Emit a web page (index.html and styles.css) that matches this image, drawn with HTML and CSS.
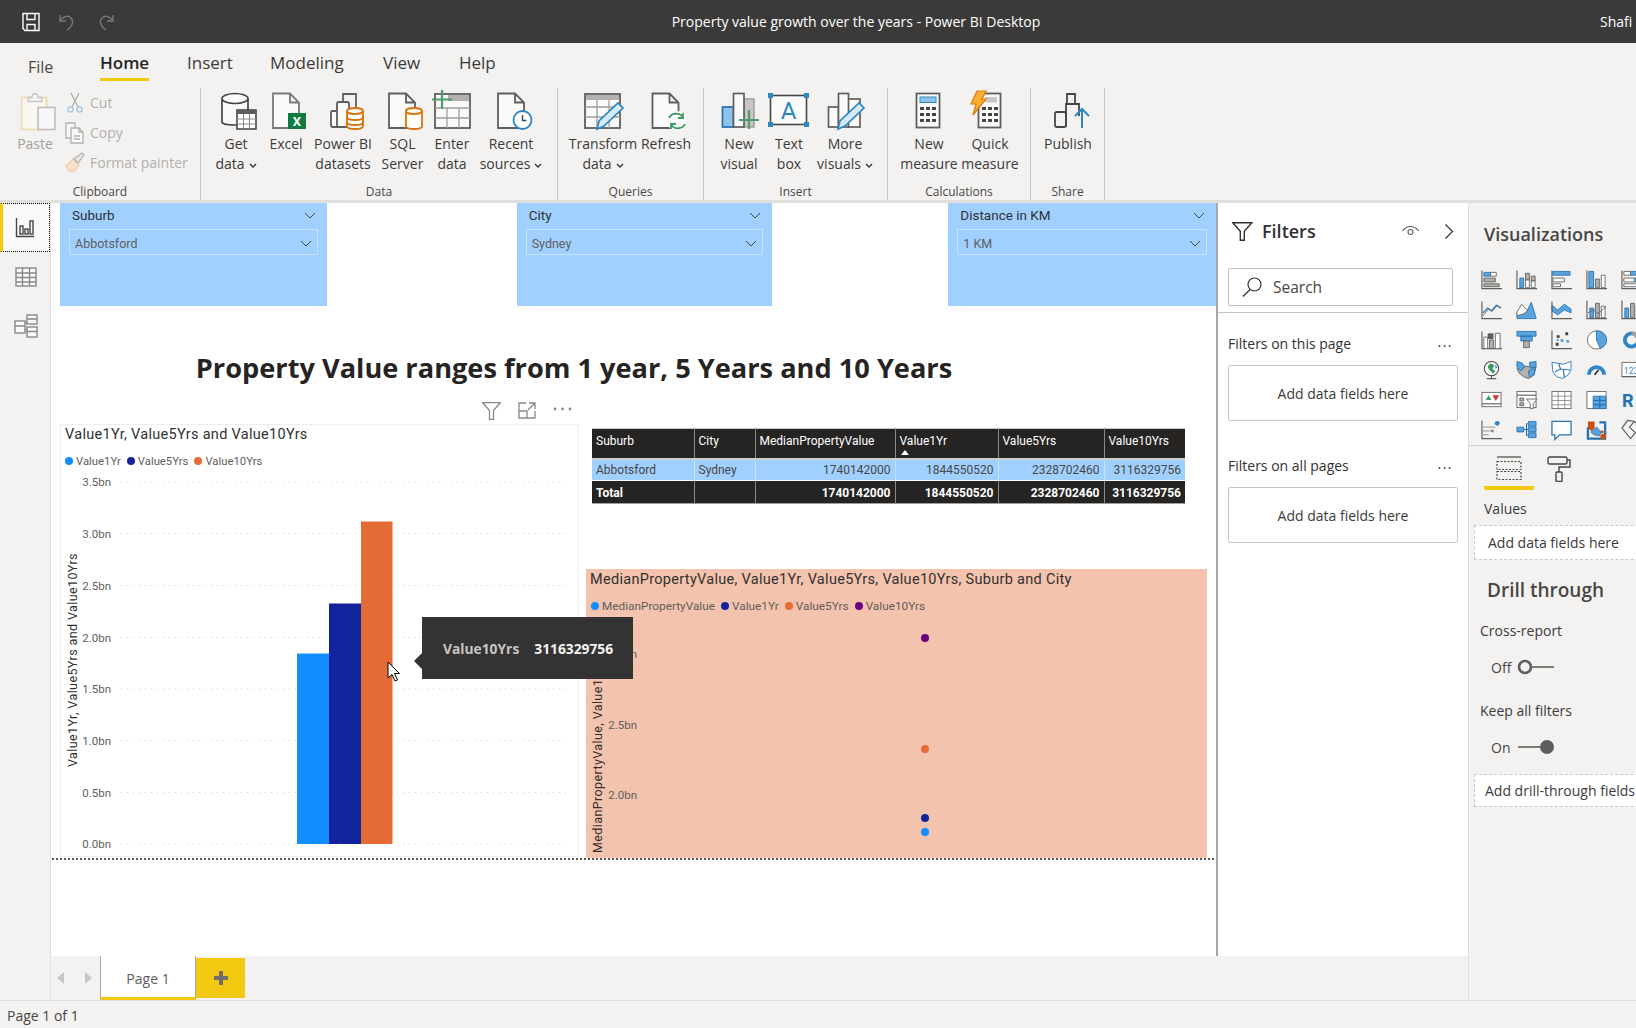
FILE: index.html
```html
<!DOCTYPE html>
<html lang="en">
<head>
  <meta charset="UTF-8">
  <title>Property value growth over the years - Power BI Desktop</title>
  <link rel="stylesheet" href="styles.css">
</head>
<body>

  <!-- Title bar -->
  <header class="titlebar">
    <div class="quick-icons">
      <svg width="20" height="20" viewBox="0 0 20 20" fill="none" stroke="#fff" stroke-width="1.4"><path d="M2 1.5h16v17H4l-2-2zM6 1.5v6h8v-6M6 18.5v-6h8v6"/></svg>
      <svg width="20" height="20" viewBox="0 0 20 20" fill="none" stroke="#7a7978" stroke-width="1.4"><path d="M2 3v6h6M2 9c3-5 8-6 11-3s2 8-4 12"/></svg>
      <svg width="20" height="20" viewBox="0 0 20 20" fill="none" stroke="#7a7978" stroke-width="1.4"><path d="M18 3v6h-6M18 9c-3-5-8-6-11-3s-2 8 4 12"/></svg>
    </div>
    <div class="window-title">Property value growth over the years - Power BI Desktop</div>
    <div class="user-name">Shafi</div>
  </header>

  <!-- Ribbon tabs -->
  <nav class="tabs">
    <span class="tab tab-file">File</span>
    <span class="tab tab-active">Home</span>
    <span class="tab">Insert</span>
    <span class="tab">Modeling</span>
    <span class="tab">View</span>
    <span class="tab">Help</span>
  </nav>

  <!-- Ribbon -->
  <section class="ribbon">

    <div class="group group-clipboard">
      <div class="group-body clip-body">
        <div class="btn btn-disabled paste-btn">
          <svg class="btn-icon" viewBox="0 0 44 44"><rect x="8.5" y="7.5" width="25" height="32" fill="#fbf8f3" stroke="#f3dcbc" stroke-width="2"/><path d="M15 7.5h4c0-5 6-5 6 0h4v4H15z" fill="#f3f2f1" stroke="#c8c6c4" stroke-width="1.3"/><rect x="25" y="17.5" width="17" height="22" fill="#f8f8f8" stroke="#c0bebc" stroke-width="1.6"/></svg>
          <span>Paste</span>
        </div>
        <div class="clip-list">
          <div class="clip-item">
            <svg width="20" height="22" viewBox="0 0 20 22" fill="none" stroke="#b3b0ad" stroke-width="1.3"><path d="M6 1l7 14M14 1L7 15"/><circle cx="5.5" cy="17.5" r="2.6" stroke="#9fc4e4"/><circle cx="14.5" cy="17.5" r="2.6" stroke="#9fc4e4"/></svg>
            <span>Cut</span>
          </div>
          <div class="clip-item">
            <svg width="20" height="22" viewBox="0 0 20 22" fill="#f8f8f8" stroke="#b3b0ad" stroke-width="1.3"><path d="M1 1h9v15H1z"/><path d="M6 6h8l4 4v11H6zM14 6v4h4M9 14h6M9 17h6"/></svg>
            <span>Copy</span>
          </div>
          <div class="clip-item">
            <svg width="20" height="22" viewBox="0 0 20 22" stroke="#b3b0ad" stroke-width="1.2"><path d="M1 14l7-7 6 6-5 7c-3 0-7-2-8-6z" fill="#f8dfc8" stroke="#eecbaa"/><path d="M9 7l8-6 2 2-6 8z" fill="#e8e8e8"/></svg>
            <span>Format painter</span>
          </div>
        </div>
      </div>
      <div class="group-name">Clipboard</div>
    </div>

    <div class="group group-data">
      <div class="group-body cols-data">
        <div class="btn">
          <svg class="btn-icon" viewBox="0 0 44 44"><path d="M8 9v23c0 4 26 4 26 0V9" fill="#fafafa" stroke="#484644" stroke-width="1.7"/><ellipse cx="21" cy="8.5" rx="13" ry="5" fill="#fafafa" stroke="#484644" stroke-width="1.7"/><rect x="23" y="20" width="19" height="19" fill="#fff" stroke="#484644" stroke-width="1.6"/><path d="M23 20h19v4H23z" fill="#605e5c"/><path d="M23 29h19M23 34h19M29.500 24v15M35.500 24v15" stroke="#8a8886" fill="none"/></svg>
          <span>Get</span><span>data<svg class="caret" viewBox="0 0 8 5"><path d="M1 1l3 3 3-3" /></svg></span>
        </div>
        <div class="btn">
          <svg class="btn-icon" viewBox="0 0 44 44"><path d="M9 3.500h17l9 9V38H9zM26 3.500v9h9" fill="#fafafa" stroke="#7a7978" stroke-width="1.800"/><rect x="24" y="23" width="18" height="16" fill="#107c41"/><text x="33" y="35.500" class="icon-x">X</text></svg>
          <span>Excel</span>
        </div>
        <div class="btn">
          <svg class="btn-icon" viewBox="0 0 44 44" fill="#fafafa" stroke="#605e5c" stroke-width="1.800"><rect x="10" y="21" width="12" height="16" rx="1.500"/><rect x="16" y="12" width="12" height="25" rx="1.500"/><path d="M22 12V4h13v15" fill="none"/><path d="M26 21v15c0 4 16 4 16 0V21" fill="#fff" stroke="#d9730d"/><ellipse cx="34" cy="21" rx="8" ry="3" fill="#fff" stroke="#d9730d"/><path d="M26 27c0 4 16 4 16 0M26 32c0 4 16 4 16 0" fill="none" stroke="#d9730d"/></svg>
          <span>Power BI</span><span>datasets</span>
        </div>
        <div class="btn">
          <svg class="btn-icon" viewBox="0 0 44 44"><path d="M8 3.500h17l9 9V38H8zM25 3.500v9h9" fill="#fafafa" stroke="#605e5c" stroke-width="1.800"/><path d="M25 21v15c0 4 16 4 16 0V21" fill="#fff" stroke="#d9730d" stroke-width="1.800"/><ellipse cx="33" cy="21" rx="8" ry="3" fill="#fff" stroke="#d9730d" stroke-width="1.800"/></svg>
          <span>SQL</span><span>Server</span>
        </div>
        <div class="btn">
          <svg class="btn-icon" viewBox="0 0 44 44"><rect x="5" y="4" width="35" height="34" fill="#fafafa" stroke="#605e5c" stroke-width="1.800"/><rect x="18" y="5" width="21" height="6" fill="#b3b0ad"/><path d="M5 18h35M5 28h35M17 18v20M29 18v20" stroke="#a19f9d" stroke-width="1.300" fill="none"/><path d="M12 0v19M2 9.500h20" stroke="#4c9c6c" stroke-width="2.200" fill="none"/></svg>
          <span>Enter</span><span>data</span>
        </div>
        <div class="btn">
          <svg class="btn-icon" viewBox="0 0 44 44"><path d="M9 3.500h17l9 9V38H9zM26 3.500v9h9" fill="#fafafa" stroke="#605e5c" stroke-width="1.800"/><circle cx="33.500" cy="30" r="9" fill="#fff" stroke="#2e86c1" stroke-width="1.800"/><path d="M33.500 25v5.500h4" fill="none" stroke="#484644" stroke-width="1.400"/></svg>
          <span>Recent</span><span>sources<svg class="caret" viewBox="0 0 8 5"><path d="M1 1l3 3 3-3" /></svg></span>
        </div>
      </div>
      <div class="group-name">Data</div>
    </div>

    <div class="group group-queries">
      <div class="group-body cols-queries">
        <div class="btn">
          <svg class="btn-icon" viewBox="0 0 44 44"><rect x="4" y="4" width="35" height="34" fill="#fafafa" stroke="#605e5c" stroke-width="1.800"/><rect x="5" y="5" width="33" height="5" fill="#b3b0ad"/><path d="M4 17h35M4 27h35M16 10v28M28 10v28" stroke="#a19f9d" stroke-width="1.300" fill="none"/><path d="M16 39l2-8 19-18 5 5-19 18z" fill="#d6eafa" stroke="#2e86c1" stroke-width="1.700"/></svg>
          <span>Transform</span><span>data<svg class="caret" viewBox="0 0 8 5"><path d="M1 1l3 3 3-3" /></svg></span>
        </div>
        <div class="btn">
          <svg class="btn-icon" viewBox="0 0 44 44"><path d="M8.500 3.500h17l9 9V38h-26zM25.500 3.500v9h9" fill="#fafafa" stroke="#605e5c" stroke-width="1.800"/><circle cx="33" cy="31" r="10" fill="#fafafa" stroke="none"/><path d="M25 28c2-5 10-6 14-1M41 34c-2 5-10 6-14 1M39 23v5h-5M27 39v-5h5" fill="none" stroke="#3c9a5f" stroke-width="1.800"/></svg>
          <span>Refresh</span>
        </div>
      </div>
      <div class="group-name">Queries</div>
    </div>

    <div class="group group-insert">
      <div class="group-body cols-insert">
        <div class="btn">
          <svg class="btn-icon" viewBox="0 0 44 44"><rect x="5.500" y="17" width="11" height="20" fill="#8fc3ec" stroke="#1f6fb2" stroke-width="1.700"/><rect x="27" y="9" width="10" height="28" fill="#c8c6c4" stroke="#a19f9d" stroke-width="1.500"/><rect x="16.500" y="3.500" width="10.500" height="33.500" fill="#fafafa" stroke="#605e5c" stroke-width="1.700"/><path d="M32 20v19M22 30h20" stroke="#4c9c6c" stroke-width="2.200" fill="none"/></svg>
          <span>New</span><span>visual</span>
        </div>
        <div class="btn">
          <svg class="btn-icon" viewBox="0 0 44 44"><rect x="3.500" y="5.500" width="36" height="29" fill="#fafafa" stroke="#484644" stroke-width="1.600"/><text x="21.500" y="29" class="icon-a">A</text><path d="M1 3h5v5H1zM37 3h5v5h-5zM1 32h5v5H1zM37 32h5v5h-5z" fill="#2e86c1"/></svg>
          <span>Text</span><span>box</span>
        </div>
        <div class="btn">
          <svg class="btn-icon" viewBox="0 0 44 44" fill="#fafafa" stroke="#605e5c" stroke-width="1.700"><rect x="5.500" y="17" width="10" height="20"/><rect x="25" y="9" width="12" height="28"/><rect x="15.500" y="3.500" width="10" height="33.500"/><path d="M15 39l2-8 19-18 5 5-19 18z" fill="#d6eafa" stroke="#2e86c1"/></svg>
          <span>More</span><span>visuals<svg class="caret" viewBox="0 0 8 5"><path d="M1 1l3 3 3-3" /></svg></span>
        </div>
      </div>
      <div class="group-name">Insert</div>
    </div>

    <div class="group group-calc">
      <div class="group-body cols-calc">
        <div class="btn">
          <svg class="btn-icon" viewBox="0 0 44 44"><rect x="9.500" y="3.500" width="23" height="34" fill="#fafafa" stroke="#605e5c" stroke-width="1.800"/><rect x="13" y="7" width="16" height="5.500" fill="#8fc3ec" stroke="#2e86c1"/><path d="M13 17h4v3h-4zM19 17h4v3h-4zM25 17h4v3h-4zM13 23h4v3h-4zM19 23h4v3h-4zM25 23h4v3h-4zM13 29h4v3h-4zM19 29h4v3h-4zM25 29h4v3h-4z" fill="#484644"/></svg>
          <span>New</span><span>measure</span>
        </div>
        <div class="btn">
          <svg class="btn-icon" viewBox="0 0 44 44"><rect x="10.500" y="3.500" width="22" height="34" fill="#fafafa" stroke="#605e5c" stroke-width="1.800"/><rect x="17" y="7" width="12" height="5.500" fill="#c8c6c4"/><path d="M14 17h4v3h-4zM20 17h4v3h-4zM26 17h4v3h-4zM14 23h4v3h-4zM20 23h4v3h-4zM26 23h4v3h-4zM14 29h4v3h-4zM20 29h4v3h-4zM26 29h4v3h-4z" fill="#484644"/><path d="M9 1h9l-4 8h4L5 25l3-11H3z" fill="#fbb034" stroke="#dd7a0a" stroke-width="1.200"/></svg>
          <span>Quick</span><span>measure</span>
        </div>
      </div>
      <div class="group-name">Calculations</div>
    </div>

    <div class="group group-share">
      <div class="group-body cols-share">
        <div class="btn">
          <svg class="btn-icon" viewBox="0 0 44 44" fill="none" stroke="#484644" stroke-width="1.800"><rect x="9" y="22" width="11" height="15" rx="2"/><path d="M20 37V14h9v-10h-8v10M29 14h4v12"/><path d="M36 38V19M29 26l7-7 7 7" stroke="#2e86c1" stroke-width="2"/></svg>
          <span>Publish</span>
        </div>
      </div>
      <div class="group-name">Share</div>
    </div>

  </section>

  <div class="main">

    <!-- View rail -->
    <aside class="rail">
      <div class="rail-item rail-active">
        <svg width="20" height="20" viewBox="0 0 20 20" fill="none" stroke="#484644" stroke-width="1.400"><path d="M1.500 0v18.500H19"/><rect x="5" y="8" width="3" height="8"/><rect x="10" y="11" width="3" height="5"/><rect x="15" y="3" width="3" height="13"/></svg>
      </div>
      <div class="rail-item">
        <svg width="22" height="20" viewBox="0 0 22 20" fill="#fafafa" stroke="#8a8886" stroke-width="1.400"><rect x="1" y="1" width="20" height="18"/><path d="M1 6h20M1 10.500h20M1 15h20M7.500 1v18M14.500 1v18" fill="none"/></svg>
      </div>
      <div class="rail-item">
        <svg width="24" height="24" viewBox="0 0 24 24" fill="#fafafa" stroke="#8a8886" stroke-width="1.400"><rect x="13" y="1" width="10" height="9"/><rect x="1" y="7" width="10" height="12"/><rect x="13" y="13" width="10" height="10"/><path d="M1 12h10M13 5h10M13 17.500h10M11 9h2M11 16h2" fill="none"/></svg>
      </div>
    </aside>

    <div class="center">
      <div class="center-top">

        <!-- Report canvas -->
        <main class="canvas">

          <div class="slicers">
            <div class="slicer">
              <div class="slicer-head">Suburb<svg class="chev" viewBox="0 0 12 7"><path d="M1 1l5 5 5-5"/></svg></div>
              <div class="slicer-box">Abbotsford<svg class="chev" viewBox="0 0 12 7"><path d="M1 1l5 5 5-5"/></svg></div>
            </div>
            <div class="slicer slicer-city">
              <div class="slicer-head">City<svg class="chev" viewBox="0 0 12 7"><path d="M1 1l5 5 5-5"/></svg></div>
              <div class="slicer-box">Sydney<svg class="chev" viewBox="0 0 12 7"><path d="M1 1l5 5 5-5"/></svg></div>
            </div>
            <div class="slicer slicer-distance">
              <div class="slicer-head">Distance in KM<svg class="chev" viewBox="0 0 12 7"><path d="M1 1l5 5 5-5"/></svg></div>
              <div class="slicer-box">1 KM<svg class="chev" viewBox="0 0 12 7"><path d="M1 1l5 5 5-5"/></svg></div>
            </div>
          </div>

          <h1 class="report-title">Property Value ranges from 1 year, 5 Years and 10 Years</h1>

          <div class="report-row">
            <div class="left-col">
              <div class="visual-head">
                <svg width="19" height="18" viewBox="0 0 19 18" fill="none" stroke="#8a8886" stroke-width="1.300"><path d="M0.500 0.500h18l-7 8v9h-4v-9z"/></svg>
                <svg width="18" height="17" viewBox="0 0 18 17" fill="none" stroke="#8a8886" stroke-width="1.300"><path d="M8 1H1v15h16V9M1 9h8v7M11 1h6v6M17 1L10 8"/></svg>
                <svg width="19" height="18" viewBox="0 0 19 18" fill="#8a8886"><circle cx="2" cy="7" r="1.400"/><circle cx="9.500" cy="7" r="1.400"/><circle cx="17" cy="7" r="1.400"/></svg>
              </div>

              <div class="chart-card">
                <div class="chart-title">Value1Yr, Value5Yrs and Value10Yrs</div>
                <div class="legend">
                  <span class="key"><i class="dot c-blue"></i>Value1Yr</span>
                  <span class="key"><i class="dot c-navy"></i>Value5Yrs</span>
                  <span class="key"><i class="dot c-orange"></i>Value10Yrs</span>
                </div>
                <svg class="plot" width="517" height="384" viewBox="0 0 517 384">
                  <g class="grid">
                    <path d="M60 10h449M60 61.500h449M60 113.500h449M60 165.500h449M60 217h449M60 268.500h449M60 320.500h449M60 372h449"/>
                  </g>
                  <g class="tick">
                    <text x="50" y="14">3.5bn</text>
                    <text x="50" y="65.500">3.0bn</text>
                    <text x="50" y="117.500">2.5bn</text>
                    <text x="50" y="169.500">2.0bn</text>
                    <text x="50" y="221">1.5bn</text>
                    <text x="50" y="272.500">1.0bn</text>
                    <text x="50" y="324.500">0.5bn</text>
                    <text x="50" y="376">0.0bn</text>
                  </g>
                  <text class="axis-title" transform="translate(16 295) rotate(-90)">Value1Yr, Value5Yrs and Value10Yrs</text>
                  <rect x="236" y="181.500" width="32" height="190.500" fill="#118dff"/>
                  <rect x="268" y="131.500" width="32" height="240.500" fill="#12239e"/>
                  <rect x="300" y="49.500" width="31.500" height="322.500" fill="#e66c37"/>
                </svg>
              </div>
            </div>

            <div class="right-col">
              <table class="data-table">
                <colgroup>
                  <col class="w-suburb"><col class="w-city"><col class="w-median"><col class="w-one"><col class="w-five"><col class="w-ten">
                </colgroup>
                <thead>
                  <tr>
                    <th>Suburb</th><th>City</th><th>MedianPropertyValue</th><th class="sorted">Value1Yr</th><th>Value5Yrs</th><th>Value10Yrs</th>
                  </tr>
                </thead>
                <tbody>
                  <tr class="row-data">
                    <td>Abbotsford</td><td>Sydney</td><td class="num">1740142000</td><td class="num">1844550520</td><td class="num">2328702460</td><td class="num">3116329756</td>
                  </tr>
                  <tr class="row-total">
                    <td>Total</td><td></td><td class="num">1740142000</td><td class="num">1844550520</td><td class="num">2328702460</td><td class="num">3116329756</td>
                  </tr>
                </tbody>
              </table>

              <div class="scatter-card">
                <div class="chart-title">MedianPropertyValue, Value1Yr, Value5Yrs, Value10Yrs, Suburb and City</div>
                <div class="legend">
                  <span class="key"><i class="dot c-blue"></i>MedianPropertyValue</span>
                  <span class="key"><i class="dot c-navy"></i>Value1Yr</span>
                  <span class="key"><i class="dot c-orange"></i>Value5Yrs</span>
                  <span class="key"><i class="dot c-purple"></i>Value10Yrs</span>
                </div>
                <svg class="plot" width="621" height="240" viewBox="0 0 621 240">
                  <g class="grid grid-soft"><path d="M60 36h557M60 107h557M60 177h557"/></g>
                  <g class="tick">
                    <text x="51" y="40">3.0bn</text>
                    <text x="51" y="111">2.5bn</text>
                    <text x="51" y="181">2.0bn</text>
                  </g>
                  <text class="axis-title" transform="translate(16 235) rotate(-90)">MedianPropertyValue, Value1Yr...</text>
                  <circle cx="339" cy="20" r="4" fill="#6b007b"/>
                  <circle cx="339" cy="131" r="4" fill="#e66c37"/>
                  <circle cx="339" cy="200" r="4" fill="#12239e"/>
                  <circle cx="339" cy="214" r="4" fill="#118dff"/>
                </svg>
              </div>
            </div>
          </div>

          <div class="page-edge"></div>

          <div class="tooltip">
            <span class="tip-label">Value10Yrs</span><span class="tip-value">3116329756</span>
          </div>
          <svg class="cursor" width="14" height="21" viewBox="0 0 14 21"><path d="M1 1v16l4-3.500 3 6.500 2.500-1-3-6.500h5z" fill="#fff" stroke="#000" stroke-width="1"/></svg>
        </main>

        <!-- Filters pane -->
        <aside class="filters">
          <div class="filters-head">
            <svg width="21" height="19" viewBox="0 0 21 19" fill="none" stroke="#323130" stroke-width="1.400"><path d="M0.800 0.800h19l-7.500 8.500v9h-4v-9z"/></svg>
            <span class="filters-title">Filters</span>
            <svg class="eye" width="17" height="10" viewBox="0 0 17 10" fill="none" stroke="#605e5c" stroke-width="1.100"><path d="M0.500 5c4-6 12-6 16 0"/><circle cx="8.500" cy="6" r="2.500"/></svg>
            <svg width="10" height="15" viewBox="0 0 10 15" fill="none" stroke="#323130" stroke-width="1.200"><path d="M1.500 0.500l7 7-7 7"/></svg>
          </div>
          <div class="search-wrap">
            <div class="search">
              <svg width="20" height="20" viewBox="0 0 20 20" fill="none" stroke="#323130" stroke-width="1.200"><circle cx="12.500" cy="7.500" r="6.500"/><path d="M8 12.500L1 19.500"/></svg>
              <span>Search</span>
            </div>
          </div>
          <div class="filter-section">
            <div class="filter-label">Filters on this page<span class="more">...</span></div>
            <div class="drop-box">Add data fields here</div>
          </div>
          <div class="filter-section filter-section-two">
            <div class="filter-label">Filters on all pages<span class="more">...</span></div>
            <div class="drop-box">Add data fields here</div>
          </div>
        </aside>
      </div>

      <!-- Page tabs -->
      <footer class="pagebar">
        <div class="page-nav">
          <svg width="8" height="12" viewBox="0 0 8 12"><path d="M7 0v12L0 6z" fill="#c8c6c4"/></svg>
          <svg width="8" height="12" viewBox="0 0 8 12"><path d="M1 0v12l7-6z" fill="#c8c6c4"/></svg>
        </div>
        <div class="page-tab">Page 1</div>
        <div class="page-add">
          <svg width="16" height="16" viewBox="0 0 16 16"><path d="M6 1h4v5h5v4h-5v5H6v-5H1V6h5z" fill="#6f6e6d"/></svg>
        </div>
      </footer>
    </div>

    <!-- Visualizations pane -->
    <aside class="viz">
      <div class="viz-title">Visualizations</div>

      <div class="viz-grid">
        <!-- row 1 -->
        <svg viewBox="0 0 22 20"><path class="bar-gy" d="M3 8h12v4H3zM3 14h16v3H3z"/><path class="bar-bl" d="M3 2h7v4H3z"/><path class="bar-w" d="M10 2h6v4h-6z"/><path class="axis" d="M1 0v19h21"/></svg>
        <svg viewBox="0 0 22 20"><path class="bar-bl" d="M4 8h4v10H4z"/><path class="bar-gy" d="M10 3h4v7h-4zM16 6h4v5h-4z"/><path class="bar-w" d="M10 10h4v8h-4zM16 11h4v7h-4z"/><path class="axis" d="M1 0v19h21"/></svg>
        <svg viewBox="0 0 22 20"><path class="bar-bl" d="M2 1h18v4H2z"/><path class="bar-w" d="M2 8h12v4H2z"/><path class="bar-w" d="M2 14h8v3H2z"/><path class="axis" d="M1 0v19h21"/></svg>
        <svg viewBox="0 0 22 20"><path class="bar-bl" d="M3 1h5v17H3z"/><path class="bar-gy" d="M10 9h4v9h-4z"/><path class="bar-w" d="M16 5h4v13h-4z"/><path class="axis" d="M1 0v19h21"/></svg>
        <svg viewBox="0 0 22 20"><path class="bar-bl" d="M10 1h12v4H10zM14 8h8v4h-8z"/><path class="bar-w" d="M3 1h7v4H3zM3 8h11v4H3zM3 14h19v3H3z"/><path class="axis" d="M1 0v19h21"/></svg>
        <!-- row 2 -->
        <svg viewBox="0 0 22 20"><path class="axis" d="M1 1v18h21"/><path class="line-bl" d="M2 13l5-5 4 3 5-6 5 3"/><path class="axis thin" d="M2 16l6-7 4 2 5-6 4 3"/></svg>
        <svg viewBox="0 0 22 20"><path class="bar-bl" d="M1 19V13l6-3 4 2 5-10 5 16v1z"/><path class="bar-w" d="M1 12l5-8 6 7-4 3-7 2z"/></svg>
        <svg viewBox="0 0 22 20"><path class="bar-bl" d="M1 5l6 5 7-6 7 5v4l-7-3-7 5-6-4z"/><path class="axis" d="M1 1v18h21"/></svg>
        <svg viewBox="0 0 22 20"><path class="bar-bl" d="M4 8h4v10H4z"/><path class="bar-gy" d="M10 3h4v15h-4z"/><path class="bar-w" d="M16 6h4v12h-4z"/><path class="axis" d="M1 0v19h21"/><path class="axis thin" d="M2 13l6-3 5 4 8-8"/></svg>
        <svg viewBox="0 0 22 20"><path class="bar-bl" d="M4 8h4v10H4z"/><path class="bar-gy" d="M10 3h4v15h-4z"/><path class="bar-w" d="M16 6h4v12h-4z"/><path class="axis" d="M1 0v19h21"/></svg>
        <!-- row 3 -->
        <svg viewBox="0 0 22 20"><path class="axis" d="M1 1v18h21"/><path class="bar-w" d="M3 7h4v12H3z"/><path class="bar-gy" d="M9 10h4v9H9z"/><path class="bar-dk" d="M7 3h6v6H7z"/><path class="bar-w" d="M15 3h5v16h-5z"/></svg>
        <svg viewBox="0 0 22 20"><path class="bar-bl" d="M1 1h20v5H1zM5 6h12v5H5z"/><path class="bar-gy" d="M8 11h6v7H8z"/></svg>
        <svg viewBox="0 0 22 20"><path class="axis" d="M1 0v19h21"/><path class="sq-dk" d="M6 5h3v3H6zM15 2h3v3h-3zM5 13h3v3H5z"/><path class="sq-bl" d="M10 9h3v3h-3zM16 10h3v3h-3zM6 9h2v2H6z"/></svg>
        <svg viewBox="0 0 22 20"><circle class="bar-w" cx="11" cy="10" r="9.500"/><path class="bar-bl" d="M11 10V0.500A9.500 9.500 0 0 1 15 19z"/></svg>
        <svg viewBox="0 0 22 20"><circle cx="11" cy="10" r="7" fill="none" stroke="#2e86c8" stroke-width="4"/><path d="M11 3a7 7 0 0 1 7 7" fill="none" stroke="#a19f9d" stroke-width="4"/></svg>
        <!-- row 4 -->
        <svg viewBox="0 0 22 20"><circle cx="11" cy="8.500" r="7.500" fill="#fff" stroke="#484644" stroke-width="1.100"/><path d="M7 6l3-3 4 2-2 4 3 2-2 3-3-3-2-2z" fill="#3c9a5f"/><path d="M15 4l2 3-2 2z" fill="#2e86c8"/><path class="axis" d="M6 19h10M11 16v3"/></svg>
        <svg viewBox="0 0 22 20"><path class="bar-gy" d="M1 8l8-2 12 1-2 8-6 4-5-2-5-4z"/><path class="bar-bl" d="M1 1l6 2 2 4-4 4-4-4zM13 11l7-4-1 8-5 3z"/><path class="bar-bl" d="M14 2l7-1v6l-6 1z"/></svg>
        <svg viewBox="0 0 22 20"><path class="bar-w map-line" d="M1 2l7 1 5 1 8-3v9l-3 5-6 4-6-2-4-5z"/><path class="line-bl" d="M8 3l2 6-6 3M10 9l10 1M13 10l1 8"/></svg>
        <svg viewBox="0 0 22 20"><path d="M3 15a8 8 0 0 1 16 0" fill="none" stroke="#2e86c8" stroke-width="4"/><path d="M9 15l4-5" stroke="#323130" stroke-width="1.800"/></svg>
        <svg viewBox="0 0 22 20"><rect class="bar-w" x="1" y="2" width="21" height="15"/><text x="3" y="14" class="icon-num">123</text><path class="axis" d="M1 17h21"/></svg>
        <!-- row 5 -->
        <svg viewBox="0 0 22 20"><rect class="bar-w" x="1" y="2" width="20" height="15"/><path d="M5 10l3-5 3 5z" fill="#3c9a5f"/><path d="M12 5h7l-3.500 6z" fill="#d13438"/><path class="axis" d="M1 14h20"/></svg>
        <svg viewBox="0 0 22 20"><rect class="bar-w" x="1" y="1" width="20" height="17"/><path class="axis" d="M1 5h20"/><path class="bar-gy" d="M4 8h4v3H4zM4 13h4v3H4z"/><path class="bar-w" d="M11 9h11l-4 5v5h-3v-5z"/></svg>
        <svg viewBox="0 0 22 20"><rect class="bar-w" x="1" y="1" width="20" height="18"/><path class="grid-line" d="M1 6h20M1 10.500h20M1 15h20M7.500 1v18M14.500 1v18"/></svg>
        <svg viewBox="0 0 22 20"><rect class="bar-w" x="1" y="1" width="20" height="18"/><path class="bar-bl" d="M7.500 6h7v4.500h-7zM14.500 6H21v4.500h-6.500zM7.500 10.500h7V15h-7zM14.500 10.500H21V15h-6.500zM7.500 15h7v4h-7zM14.500 15H21v4h-6.500z"/></svg>
        <svg viewBox="0 0 22 20"><text x="1" y="17" class="icon-r">R</text></svg>
        <!-- row 6 -->
        <svg viewBox="0 0 22 20"><path class="axis" d="M1 0v19h21"/><circle cx="17" cy="3" r="2.500" fill="#2e86c8"/><path class="grid-line" d="M2 7h13M2 11h9M2 15h6"/><circle cx="12" cy="11" r="1.500" fill="#8a8886"/></svg>
        <svg viewBox="0 0 22 20"><path class="bar-bl" d="M1 7h7v5H1zM13 1h8v5h-8zM13 7h8v5h-8zM13 13h8v5h-8z"/><path class="line-bl" d="M8 9.500h5M11 3.500v12h2M11 3.500h2"/></svg>
        <svg viewBox="0 0 22 20"><path class="bubble" d="M1 1h20v14H9l-5 5v-5H1z"/></svg>
        <svg viewBox="0 0 22 20"><path class="line-bl thick" d="M2 7v12h18V2h-6"/><path class="bar-bl" d="M5 12l6-5 5 5-2 4-6-1z"/><path d="M2 1h7v7l-3.500 3L2 8z" fill="#ca5010"/><circle cx="17" cy="12" r="1.500" fill="#ca5010"/><circle cx="18" cy="17" r="3" fill="#ca5010"/></svg>
        <svg viewBox="0 0 22 20"><path class="axis" d="M7 0L1 8l9 11 5-6-6-6 5-6zM14 1l8 8-5 6"/></svg>
      </div>

      <div class="viz-tabs">
        <div class="viz-tab viz-tab-active">
          <svg width="26" height="26" viewBox="0 0 26 26" fill="none" stroke="#484644" stroke-width="1.200"><path d="M1 1h24" /><path stroke-dasharray="2 1.500" d="M1 5.500h24v8H1zM1 15.500h24v8H1z"/></svg>
        </div>
        <div class="viz-tab">
          <svg width="24" height="26" viewBox="0 0 24 26" fill="none" stroke="#484644" stroke-width="1.400"><rect x="1" y="1" width="19" height="7" rx="1.500"/><path d="M20 4h3v7H12v5"/><rect x="9" y="16" width="6" height="9.500" rx="1"/></svg>
        </div>
      </div>

      <div class="well-label values-label">Values</div>
      <div class="well">Add data fields here</div>

      <div class="drill-title">Drill through</div>
      <div class="well-label drill-label">Cross-report</div>
      <div class="toggle">
        <span>Off</span>
        <svg width="38" height="16" viewBox="0 0 38 16" fill="none" stroke="#605e5c"><circle cx="8" cy="8" r="6" stroke-width="2.600" /><path d="M14 8h23" stroke-width="1.600"/></svg>
      </div>
      <div class="well-label drill-label keep-label">Keep all filters</div>
      <div class="toggle">
        <span>On</span>
        <svg width="38" height="16" viewBox="0 0 38 16" fill="#605e5c" stroke="#605e5c"><path d="M1 8h26" stroke-width="1.600"/><circle cx="30" cy="8" r="7" stroke="none"/></svg>
      </div>
      <div class="well well-drill">Add drill-through fields here</div>
    </aside>
  </div>

  <!-- Status bar -->
  <footer class="statusbar">Page 1 of 1</footer>

</body>
</html>
```

FILE: styles.css
```css
:root {
  --pane-bg: #f3f2f1;
  --line: #e1dfdd;
  --yellow: #f2c811;
  --text: #323130;
  --slicer: #a0d0ff;
  --seg: "Open Sans", "Noto Sans", sans-serif;
  --din: Roboto, "Liberation Sans", sans-serif;
}

* {
  box-sizing: border-box;
}

html, body {
  height: 100%;
  margin: 0;
  overflow: hidden;
}

body {
  display: flex;
  flex-direction: column;
  font-family: var(--seg);
  color: var(--text);
  background: var(--pane-bg);
}

/* Title bar */
.titlebar {
  display: flex;
  align-items: center;
  height: 43px;
  flex: none;
  background: #3b3a39;
  color: #fff;
  font-size: 14px;
}

.quick-icons {
  display: flex;
  gap: 17px;
  width: 120px;
  padding-left: 21px;
}

.window-title {
  flex: 1;
  text-align: center;
  padding-right: 8px;
}

.user-name {
  width: 36px;
}

/* Tabs */
.tabs {
  display: grid;
  grid-template-columns: 72px 87px 83px 113px 76px 1fr;
  align-items: start;
  height: 45px;
  flex: none;
  padding-left: 28px;
  font-size: 17px;
}

.tab {
  justify-self: start;
  line-height: 24px;
  margin-top: 8px;
  padding-bottom: 3px;
  color: #3b3a39;
}

.tab-file {
  margin-top: 12px;
  font-size: 16px;
  color: #484644;
}

.tab-active {
  font-weight: 600;
  border-bottom: 3px solid var(--yellow);
  padding-bottom: 3px;
  color: #252423;
}

/* Ribbon */
.ribbon {
  display: flex;
  height: 115px;
  flex: none;
  border-bottom: 3px solid var(--line);
}

.group {
  display: flex;
  flex-direction: column;
  height: 112px;
  border-right: 1px solid #c8c6c4;
  font-size: 14px;
  line-height: 20px;
}

.group-clipboard { width: 201px; }
.group-data { width: 357px; padding-left: 3px; }
.group-queries { width: 146px; padding-left: 8px; }
.group-insert { width: 184px; padding-left: 10px; }
.group-calc { width: 143px; padding-left: 10px; }
.group-share { width: 74px; }

.group-body {
  flex: 1;
  display: grid;
}

.cols-data { grid-template-columns: 64px 36px 78px 41px 58px 60px; }
.cols-queries { grid-template-columns: 74px 52px; }
.cols-insert { grid-template-columns: 50px 50px 62px; }
.cols-calc { grid-template-columns: 62px 60px; }
.cols-share { grid-template-columns: 74px; }

.clip-body {
  grid-template-columns: 64px 1fr;
  padding-left: 3px;
}

.group-name {
  height: 16px;
  line-height: 16px;
  font-size: 12px;
  text-align: center;
  color: #484644;
}

.group-data .group-name { margin-left: -3px; }
.group-queries .group-name { margin-left: -8px; }
.group-insert .group-name { margin-left: -10px; }
.group-calc .group-name { margin-left: -10px; }

.btn {
  display: flex;
  flex-direction: column;
  align-items: center;
  white-space: nowrap;
  color: #3b3a39;
}

.btn-icon {
  width: 44px;
  height: 44px;
  margin-top: 2px;
  flex: none;
}

.btn-disabled {
  color: #a19f9d;
  width: 64px;
}

.caret {
  width: 8px;
  height: 5px;
  margin-left: 4px;
  vertical-align: 1px;
  fill: none;
  stroke: #323130;
  stroke-width: 1.300;
}

.clip-list {
  margin-left: -3px;
}

.clip-item {
  display: flex;
  align-items: center;
  gap: 5px;
  height: 30px;
  padding-left: 1px;
  color: #b3b0ad;
}

.icon-x {
  font: bold 13px var(--din);
  fill: #fff;
  text-anchor: middle;
}

.icon-a {
  font: 24px var(--din);
  fill: #2e86c1;
  text-anchor: middle;
}

.icon-num {
  font: 9px var(--din);
  fill: #2e86c8;
}

.icon-r {
  font: bold 19px var(--din);
  fill: #2472b3;
}

/* Main area */
.main {
  display: flex;
  flex: 1;
  min-height: 0;
}

.rail {
  width: 51px;
  flex: none;
  border-right: 1px solid var(--line);
}

.rail-item {
  display: flex;
  align-items: center;
  justify-content: center;
  height: 49px;
  padding-left: 1px;
}

.rail-active {
  background: #fafafa;
  border: 1px dotted #000;
  border-left: 3px solid var(--yellow);
  padding: 0 3px 0 0;
}

.center {
  display: flex;
  flex-direction: column;
  width: 1417px;
  flex: none;
}

.center-top {
  display: flex;
  height: 753px;
  flex: none;
}

/* Report canvas */
.canvas {
  position: relative;
  width: 1165px;
  flex: none;
  padding-left: 9px;
  background: #fff;
}

.slicers {
  display: flex;
}

.slicer {
  width: 267px;
  height: 103px;
  padding: 2px 9px 0;
  background: var(--slicer);
  font-family: var(--din);
}

.slicer-city {
  width: 256px;
  margin-left: 190px;
}

.slicer-distance {
  width: 268px;
  margin-left: 176px;
}

.slicer-head {
  display: flex;
  justify-content: space-between;
  align-items: center;
  height: 20px;
  margin: 0 0 4px 3px;
  padding-right: 2px;
  font-size: 13.500px;
  color: #323130;
}

.slicer-box {
  display: flex;
  justify-content: space-between;
  align-items: center;
  height: 26px;
  padding: 3px 5px 0;
  border: 1px solid #c7e2fb;
  font-size: 12.500px;
  color: #605e5c;
}

.chev {
  width: 12px;
  height: 7px;
  fill: none;
  stroke: #484644;
  stroke-width: 1;
}

.report-title {
  width: 1028px;
  margin: 42px 0 14px;
  font-size: 27.200px;
  line-height: 40px;
  font-weight: 700;
  text-align: center;
  color: #252423;
}

.report-row {
  display: flex;
  height: 456px;
}

.left-col {
  width: 519px;
  flex: none;
}

.visual-head {
  display: flex;
  justify-content: flex-end;
  gap: 17px;
  height: 22px;
  padding-right: 7px;
}

.chart-card {
  height: 433px;
  border: 1px solid #eeeeee;
}

.chart-title {
  height: 20px;
  padding-left: 4px;
  font-family: var(--din);
  font-size: 14.500px;
  line-height: 20px;
  letter-spacing: 0.3px;
  white-space: nowrap;
  color: #323130;
}

.legend {
  display: flex;
  align-items: center;
  gap: 6px;
  height: 20px;
  margin-top: 6px;
  padding-left: 4px;
  font-family: var(--din);
  font-size: 11.300px;
  color: #605e5c;
}

.key {
  display: flex;
  align-items: center;
  gap: 3px;
}

.dot {
  width: 8px;
  height: 8px;
  border-radius: 50%;
}

.c-blue { background: #118dff; }
.c-navy { background: #12239e; }
.c-orange { background: #e66c37; }
.c-purple { background: #6b007b; }

.plot {
  display: block;
}

.chart-card .plot {
  margin-top: 1px;
}

.grid path {
  fill: none;
  stroke: #d2d0ce;
  stroke-width: 1;
  stroke-dasharray: 1 5;
}

.grid-soft path {
  stroke: #d9cfc9;
}

.tick text {
  font: 11.500px var(--din);
  fill: #605e5c;
  text-anchor: end;
}

.axis-title {
  font: 12.500px var(--din);
  letter-spacing: 0.4px;
  fill: #323130;
}

.right-col {
  width: 640px;
  flex: none;
}

/* Table */
.data-table {
  width: 593px;
  margin: 26px 0 0 13px;
  table-layout: fixed;
  border-collapse: collapse;
  font-family: var(--din);
  font-size: 12px;
  border-top: 1px solid #c8c6c4;
  border-bottom: 1px solid #a19f9d;
}

.w-suburb { width: 102px; }
.w-city { width: 61px; }
.w-median { width: 140px; }
.w-one { width: 103px; }
.w-five { width: 106px; }
.w-ten { width: 81px; }

.data-table th,
.data-table td {
  padding: 0 4px;
  border-left: 1px solid #8a8886;
  white-space: nowrap;
  overflow: hidden;
}

.data-table th:first-child,
.data-table td:first-child {
  border-left: none;
}

.data-table th {
  position: relative;
  height: 30px;
  padding-bottom: 5px;
  background: #252423;
  color: #fff;
  font-weight: 400;
  text-align: left;
  border-bottom: 2px solid #d2d0ce;
}

.sorted::after {
  content: "";
  position: absolute;
  left: 5px;
  bottom: 3px;
  border-left: 4px solid transparent;
  border-right: 4px solid transparent;
  border-bottom: 5px solid #fff;
}

.row-data td {
  height: 22px;
  background: var(--slicer);
  color: #484644;
  border-bottom: 1px solid #fff;
  border-left-color: #c7e2fb;
}

.row-total td {
  height: 23px;
  padding-top: 2px;
  background: #252423;
  color: #fff;
  font-weight: 700;
}

.num {
  text-align: right;
}

.scatter-card {
  width: 621px;
  height: 289px;
  margin: 65px 0 0 7px;
  background: #f4c3ad;
}

.scatter-card .chart-title {
  height: 21px;
  line-height: 22px;
}

.scatter-card .legend {
  margin-top: 6px;
  font-size: 11.800px;
  padding-left: 5px;
}

.scatter-card .plot {
  margin-top: 2px;
}

.page-edge {
  margin: 0 2px 0 -8px;
  border-top: 2px dotted #555;
}

/* Tooltip over the chart */
.tooltip {
  position: absolute;
  left: 371px;
  top: 414px;
  display: flex;
  align-items: center;
  gap: 15px;
  width: 211px;
  height: 62px;
  padding: 1px 0 0 21px;
  background: #333;
  font-size: 13.800px;
  font-weight: 700;
  white-space: nowrap;
}

.tooltip::before {
  content: "";
  position: absolute;
  left: -8px;
  top: 36px;
  border-top: 8px solid transparent;
  border-bottom: 8px solid transparent;
  border-right: 8px solid #333;
}

.tip-label {
  color: #c8c6c4;
}

.tip-value {
  color: #f3f2f1;
}

.cursor {
  position: absolute;
  left: 336px;
  top: 458px;
}

/* Filters pane */
.filters {
  width: 252px;
  flex: none;
  background: #fff;
  border-left: 2px solid #a6a6a6;
}

.filters-head {
  display: flex;
  align-items: center;
  height: 40px;
  margin-top: 8px;
  padding: 0 14px 0 14px;
}

.filters-title {
  flex: 1;
  margin-left: 9px;
  font-size: 18px;
  font-weight: 600;
}

.eye {
  margin-right: 25px;
}

.search-wrap {
  margin-top: 17px;
  padding: 0 0 6px 10px;
  border-bottom: 1px solid #c8c6c4;
}

.search {
  display: flex;
  align-items: center;
  gap: 11px;
  width: 225px;
  height: 38px;
  padding-left: 13px;
  border: 1px solid #c0bebc;
  border-radius: 2px;
  font-size: 15.500px;
  color: #484644;
}

.filter-section {
  padding-left: 10px;
  margin-top: 21px;
}

.filter-section-two {
  margin-top: 35px;
}

.filter-label {
  display: flex;
  justify-content: space-between;
  width: 225px;
  height: 20px;
  line-height: 20px;
  font-size: 14px;
}

.more {
  letter-spacing: 1.500px;
  margin-top: -2px;
}

.drop-box {
  display: flex;
  align-items: center;
  justify-content: center;
  width: 230px;
  height: 56px;
  margin-top: 11px;
  border: 1px solid #c8c6c4;
  border-radius: 2px;
  font-size: 14px;
  color: #3b3a39;
}

/* Page tabs */
.pagebar {
  display: flex;
  height: 44px;
  flex: none;
}

.page-nav {
  display: flex;
  align-items: center;
  justify-content: space-between;
  width: 49px;
  padding: 0 8px 0 6px;
}

.page-tab {
  display: flex;
  align-items: center;
  justify-content: center;
  width: 96px;
  padding-top: 3px;
  background: #fff;
  border-left: 1px solid #a6a6a6;
  border-right: 1px solid #a6a6a6;
  border-bottom: 3px solid var(--yellow);
  font-size: 14px;
  color: #605e5c;
}

.page-add {
  display: flex;
  align-items: center;
  justify-content: center;
  width: 49px;
  height: 40px;
  margin-top: 2px;
  background: var(--yellow);
}

/* Visualizations pane */
.viz {
  flex: 1;
  min-width: 0;
  overflow: hidden;
  border-left: 1px solid var(--line);
}

.viz-title {
  margin: 18px 0 0 15px;
  height: 26px;
  line-height: 26px;
  font-size: 18px;
  font-weight: 600;
  color: #484644;
  white-space: nowrap;
}

.viz-grid {
  display: grid;
  grid-template-columns: repeat(5, 21px);
  grid-auto-rows: 20px;
  gap: 10px 14px;
  height: 175px;
  margin: 23px 0 0 12px;
  padding-bottom: 5px;
}

.viz-grid svg {
  width: 21px;
  height: 20px;
  overflow: visible;
}

.axis {
  fill: none;
  stroke: #605e5c;
  stroke-width: 1.200;
}

.thin {
  stroke-width: 0.900;
}

.bar-bl {
  fill: #5ba3dc;
  stroke: #2472b3;
  stroke-width: 0.900;
}

.bar-gy {
  fill: #b3b0ad;
  stroke: #605e5c;
  stroke-width: 0.900;
}

.bar-w {
  fill: #fff;
  stroke: #605e5c;
  stroke-width: 0.900;
}

.bar-dk {
  fill: #605e5c;
}

.line-bl {
  fill: none;
  stroke: #2472b3;
  stroke-width: 1.200;
}

.line-bl.thick {
  stroke-width: 2.400;
}

.map-line {
  stroke: #2472b3;
}

.sq-dk {
  fill: #484644;
}

.sq-bl {
  fill: #5ba3dc;
}

.grid-line {
  fill: none;
  stroke: #8a8886;
  stroke-width: 0.900;
}

.bubble {
  fill: #fff;
  stroke: #2472b3;
  stroke-width: 1.300;
}

.viz-tabs {
  display: flex;
  gap: 13px;
  height: 45px;
  padding: 10px 0 0 15px;
  border-top: 1px solid #d2d0ce;
}

.viz-tab {
  display: flex;
  justify-content: center;
  width: 50px;
  height: 34px;
}

.viz-tab + .viz-tab {
  width: 24px;
}

.viz-tab-active {
  border-bottom: 4px solid var(--yellow);
  border-radius: 0 0 2px 2px;
}

.well-label {
  height: 20px;
  margin: 8px 0 0 15px;
  line-height: 20px;
  font-size: 14px;
  color: #3b3a39;
  white-space: nowrap;
}

.values-label {
  margin-top: 9px;
}

.well {
  width: 200px;
  height: 35px;
  margin: 6px 0 0 5px;
  padding-left: 13px;
  line-height: 33px;
  background: #fff;
  border: 1px dashed #c8c6c4;
  font-size: 14px;
  color: #3b3a39;
  white-space: nowrap;
}

.drill-title {
  height: 28px;
  margin: 16px 0 0 18px;
  line-height: 28px;
  font-size: 19px;
  font-weight: 600;
  color: #484644;
}

.drill-label {
  margin: 17px 0 0 11px;
}

.keep-label {
  margin-top: 26px;
}

.toggle {
  display: flex;
  align-items: center;
  gap: 2px;
  height: 16px;
  margin: 18px 0 0 22px;
  font-size: 14px;
  color: #484644;
}

.toggle span {
  width: 24px;
}

.well-drill {
  width: 220px;
  height: 33px;
  margin-top: 19px;
  padding-left: 10px;
  line-height: 31px;
}

/* Status bar */
.statusbar {
  height: 28px;
  flex: none;
  padding-left: 7px;
  line-height: 30px;
  border-top: 1px solid var(--line);
  font-size: 14px;
  color: #484644;
}
```
